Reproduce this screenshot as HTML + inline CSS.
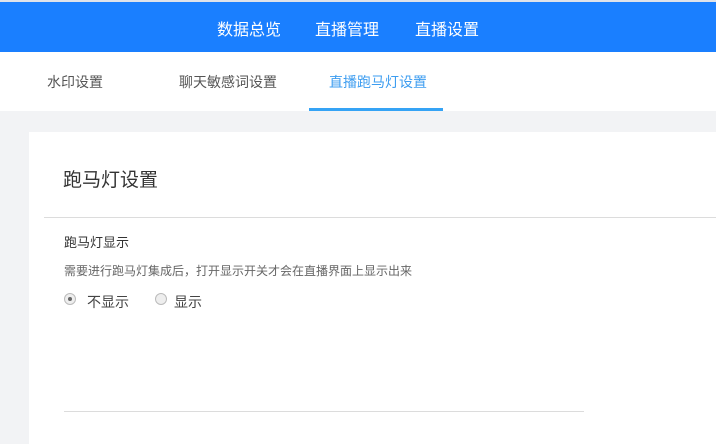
<!DOCTYPE html>
<html><head><meta charset="utf-8"><style>
*{margin:0;padding:0;box-sizing:border-box}
html,body{width:716px;height:444px;overflow:hidden}
body{background:#f2f3f5;font-family:"Liberation Sans","Noto Sans CJK SC",sans-serif;position:relative}
.top{position:absolute;left:0;top:0;width:716px;height:52px;background:#1a7fff;border-top:2px solid #dfe3ea}
.top span{position:absolute;top:14px;color:#fff;font-size:16px}
.tabs{position:absolute;left:0;top:52px;width:716px;height:59px;background:#fff}
.tabs span{position:absolute;top:20px;font-size:14px;color:#555}
.ul{position:absolute;left:309px;top:108px;width:134px;height:3px;background:#35a3f5}
.card{position:absolute;left:29px;top:132px;width:687px;height:312px;background:#fff}
.abs{position:absolute}
.radio{position:absolute;width:12px;height:12px;border-radius:50%;border:1px solid #bbb;background:#eee}
</style></head><body>
<div class="top"><span style="left:217px">数据总览</span><span style="left:315px">直播管理</span><span style="left:415px">直播设置</span></div>
<div class="tabs"><span style="left:47px">水印设置</span><span style="left:179px">聊天敏感词设置</span><span style="left:329px;color:#3d9df0">直播跑马灯设置</span></div>
<div class="ul"></div>
<div class="card"></div>
<div class="abs" style="left:63px;top:165px;font-size:19px;color:#333">跑马灯设置</div>
<div class="abs" style="left:44px;top:217px;width:672px;height:1px;background:#dcdcdc"></div>
<div class="abs" style="left:64px;top:232px;font-size:13px;color:#333">跑马灯显示</div>
<div class="abs" style="left:64px;top:262px;font-size:12px;color:#666">需要进行跑马灯集成后，打开显示开关才会在直播界面上显示出来</div>
<div class="radio" style="left:64px;top:293px"><div style="position:absolute;left:3px;top:3px;width:4px;height:4px;border-radius:50%;background:#666"></div></div>
<div class="abs" style="left:87px;top:292px;font-size:14px;color:#444">不显示</div>
<div class="radio" style="left:155px;top:293px"></div>
<div class="abs" style="left:174px;top:292px;font-size:14px;color:#444">显示</div>
<div class="abs" style="left:64px;top:411px;width:520px;height:1px;background:#dcdcdc"></div>
</body></html>
